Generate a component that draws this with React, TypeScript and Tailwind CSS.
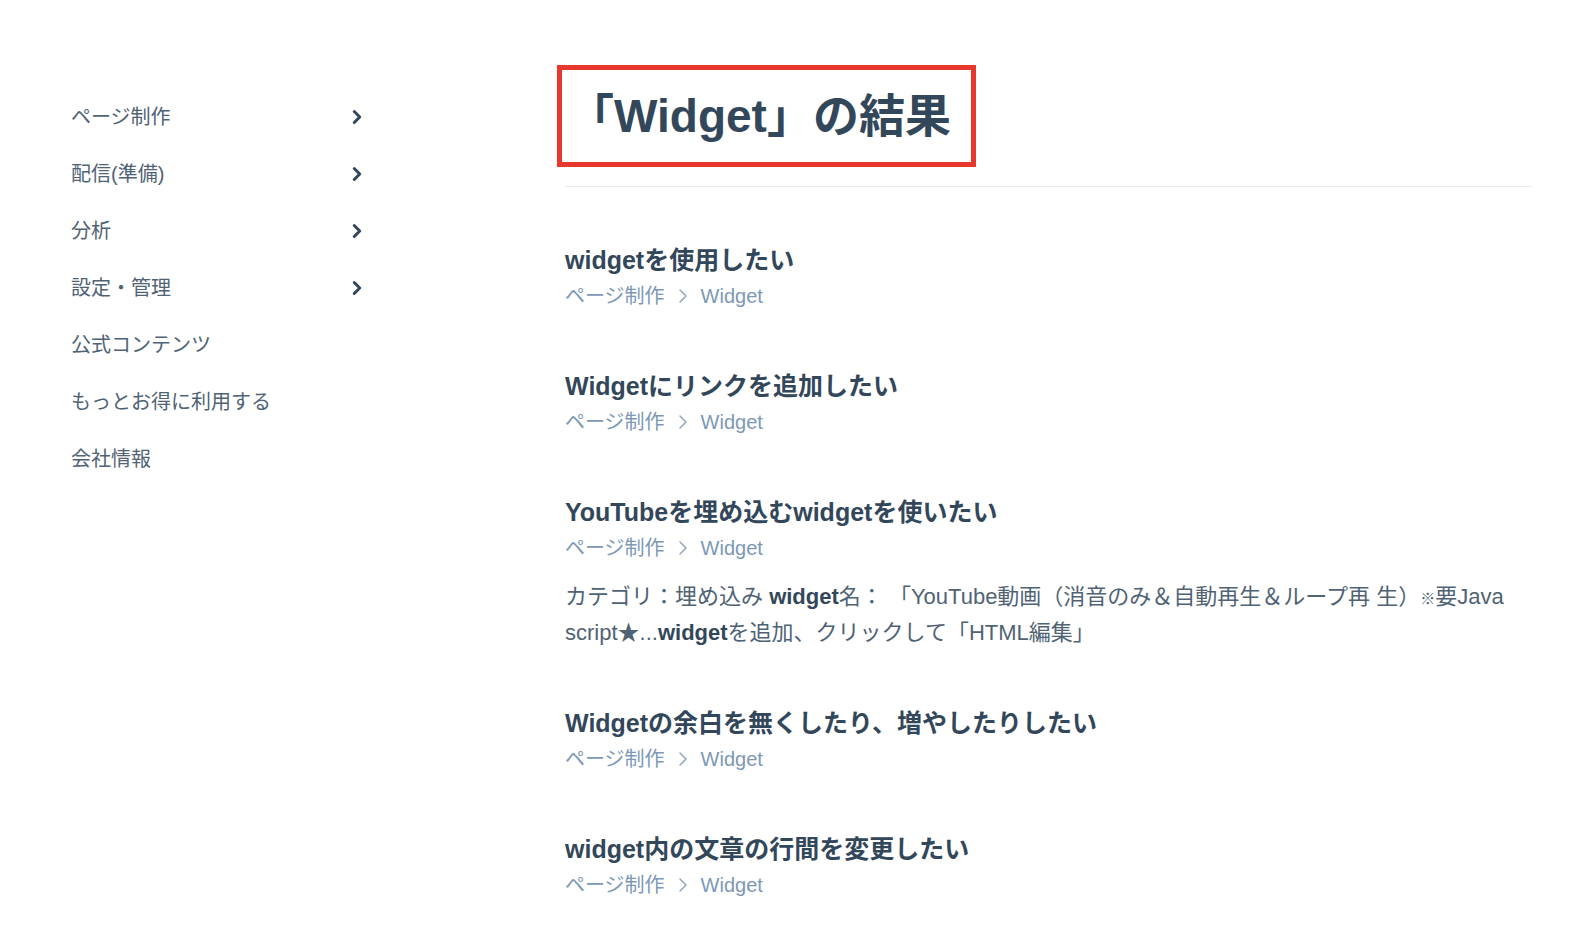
import { ChevronRight } from "lucide-react";

const font = "font-['Liberation_Sans','Noto_Sans_CJK_JP',sans-serif]";

const menu = [
  { label: "ページ制作", arrow: true },
  { label: "配信(準備)", arrow: true },
  { label: "分析", arrow: true },
  { label: "設定・管理", arrow: true },
  { label: "公式コンテンツ", arrow: false },
  { label: "もっとお得に利用する", arrow: false },
  { label: "会社情報", arrow: false },
];

type Result = {
  title: React.ReactNode;
  desc?: React.ReactNode;
};

const results: Result[] = [
  { title: "widgetを使用したい" },
  { title: "Widgetにリンクを追加したい" },
  {
    title: "YouTubeを埋め込むwidgetを使いたい",
    desc: (
      <>
        カテゴリ：埋め込み <b className="font-bold text-[#33475b]">widget</b>
        名： 「YouTube動画（消音のみ＆自動再生＆ループ再 生）
        <span className="text-[15px] leading-[0]">※</span>要Java script★...
        <b className="font-bold text-[#33475b]">widget</b>を追加、クリックして「HTML編集」
      </>
    ),
  },
  { title: "Widgetの余白を無くしたり、増やしたりしたい" },
  { title: "widget内の文章の行間を変更したい" },
];

function Crumbs() {
  return (
    <div className="flex items-center text-[20px] leading-[36px] text-[#7c98b6]">
      <span>ページ制作</span>
      <ChevronRight className="mx-[6px] h-[24px] w-[24px] text-[#8fa6bd]" strokeWidth={1.5} />
      <span>Widget</span>
    </div>
  );
}

export default function App() {
  return (
    <div className={`${font} flex min-h-[938px] bg-white pl-[71px] text-[#33475b]`}>
      <nav className="w-[297px] shrink-0 pt-[88px]">
        {menu.map((item) => (
          <div
            key={item.label}
            className="flex h-[57px] items-center justify-between text-[20px] text-[#4f6375]"
          >
            <span>{item.label}</span>
            {item.arrow && (
              <ChevronRight className="h-[22px] w-[22px] text-[#33475b]" strokeWidth={3.2} />
            )}
          </div>
        ))}
      </nav>

      <main className="ml-[197px] w-[967px] pt-[65px]">
        <h1 className="-ml-[8px] inline-block border-[5px] border-[#e8372c] pl-[6px] pr-[20px] py-[15px] text-[46px] font-bold leading-[62px] text-[#33475b]">
          「Widget」の結果
        </h1>
        <div className="mt-[19px] h-px bg-[#e6eaee]" />

        <div className="mt-[55px] flex flex-col gap-[54px]">
          {results.map((r, i) => (
            <div key={i}>
              <h2 className="text-[25px] font-bold leading-[36px] text-[#33475b]">{r.title}</h2>
              <Crumbs />
              {r.desc && (
                <p className="mt-[13px] text-[22px] leading-[36px] text-[#4f6375]">{r.desc}</p>
              )}
            </div>
          ))}
        </div>
      </main>
    </div>
  );
}
